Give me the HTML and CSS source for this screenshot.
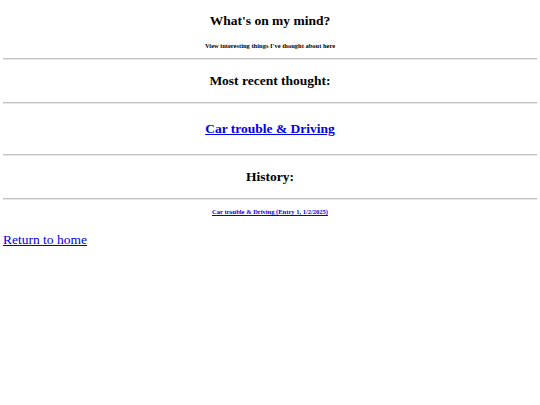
FILE: index.html
```html
<!DOCTYPE html>
<html>
<head>
<meta charset="utf-8">
<title>What's on my mind?</title>
<link rel="stylesheet" href="styles.css">
</head>
<body>
<main class="page">
  <h1 class="title">What's on my mind?</h1>
  <p class="subtitle">View interesting things I've thought about here</p>
  <hr class="rule rule-a">
  <h2 class="heading heading-recent">Most recent thought:</h2>
  <hr class="rule rule-b">
  <h2 class="heading heading-link"><a href="#">Car trouble &amp; Driving</a></h2>
  <hr class="rule rule-c">
  <h2 class="heading heading-history">History:</h2>
  <hr class="rule rule-d">
  <p class="entry"><a href="#">Car trouble &amp; Driving (Entry 1, 1/2/2025)</a></p>
  <a class="home" href="#">Return to home</a>
</main>
</body>
</html>
```
FILE: styles.css
```css
html, body {
  margin: 0;
  padding: 0;
  background: #ffffff;
}
body {
  font-family: "Liberation Serif", "Times New Roman", serif;
  color: #000000;
}
.page {
  display: flex;
  flex-direction: column;
  align-items: stretch;
  padding: 0 3px;
}
a {
  color: #0000ee;
  text-decoration: underline;
}
.title,
.heading {
  font-size: 13.5px;
  line-height: 16px;
  font-weight: bold;
  text-align: center;
  margin: 0;
}
.title {
  margin-top: 13px;
}
.subtitle {
  font-size: 6.5px;
  line-height: 8px;
  font-weight: bold;
  text-align: center;
  margin: 13px 0 0;
}
.rule {
  width: 100%;
  height: 0;
  margin: 0;
  border: none;
  border-top: 1px solid #c4c4c4;
  border-bottom: 1px solid #e6e6e6;
  box-sizing: border-box;
}
.rule-a { margin-top: 8px; }
.heading-recent { margin-top: 13px; }
.rule-b { margin-top: 13px; }
.heading-link { margin-top: 17px; }
.rule-c { margin-top: 17px; }
.heading-history { margin-top: 13px; }
.rule-d { margin-top: 13px; }
.entry {
  font-size: 6.5px;
  line-height: 8px;
  font-weight: bold;
  text-align: center;
  margin: 8px 0 0;
}
.home {
  align-self: flex-start;
  font-size: 13.5px;
  line-height: 16px;
  margin-top: 16px;
}
```
